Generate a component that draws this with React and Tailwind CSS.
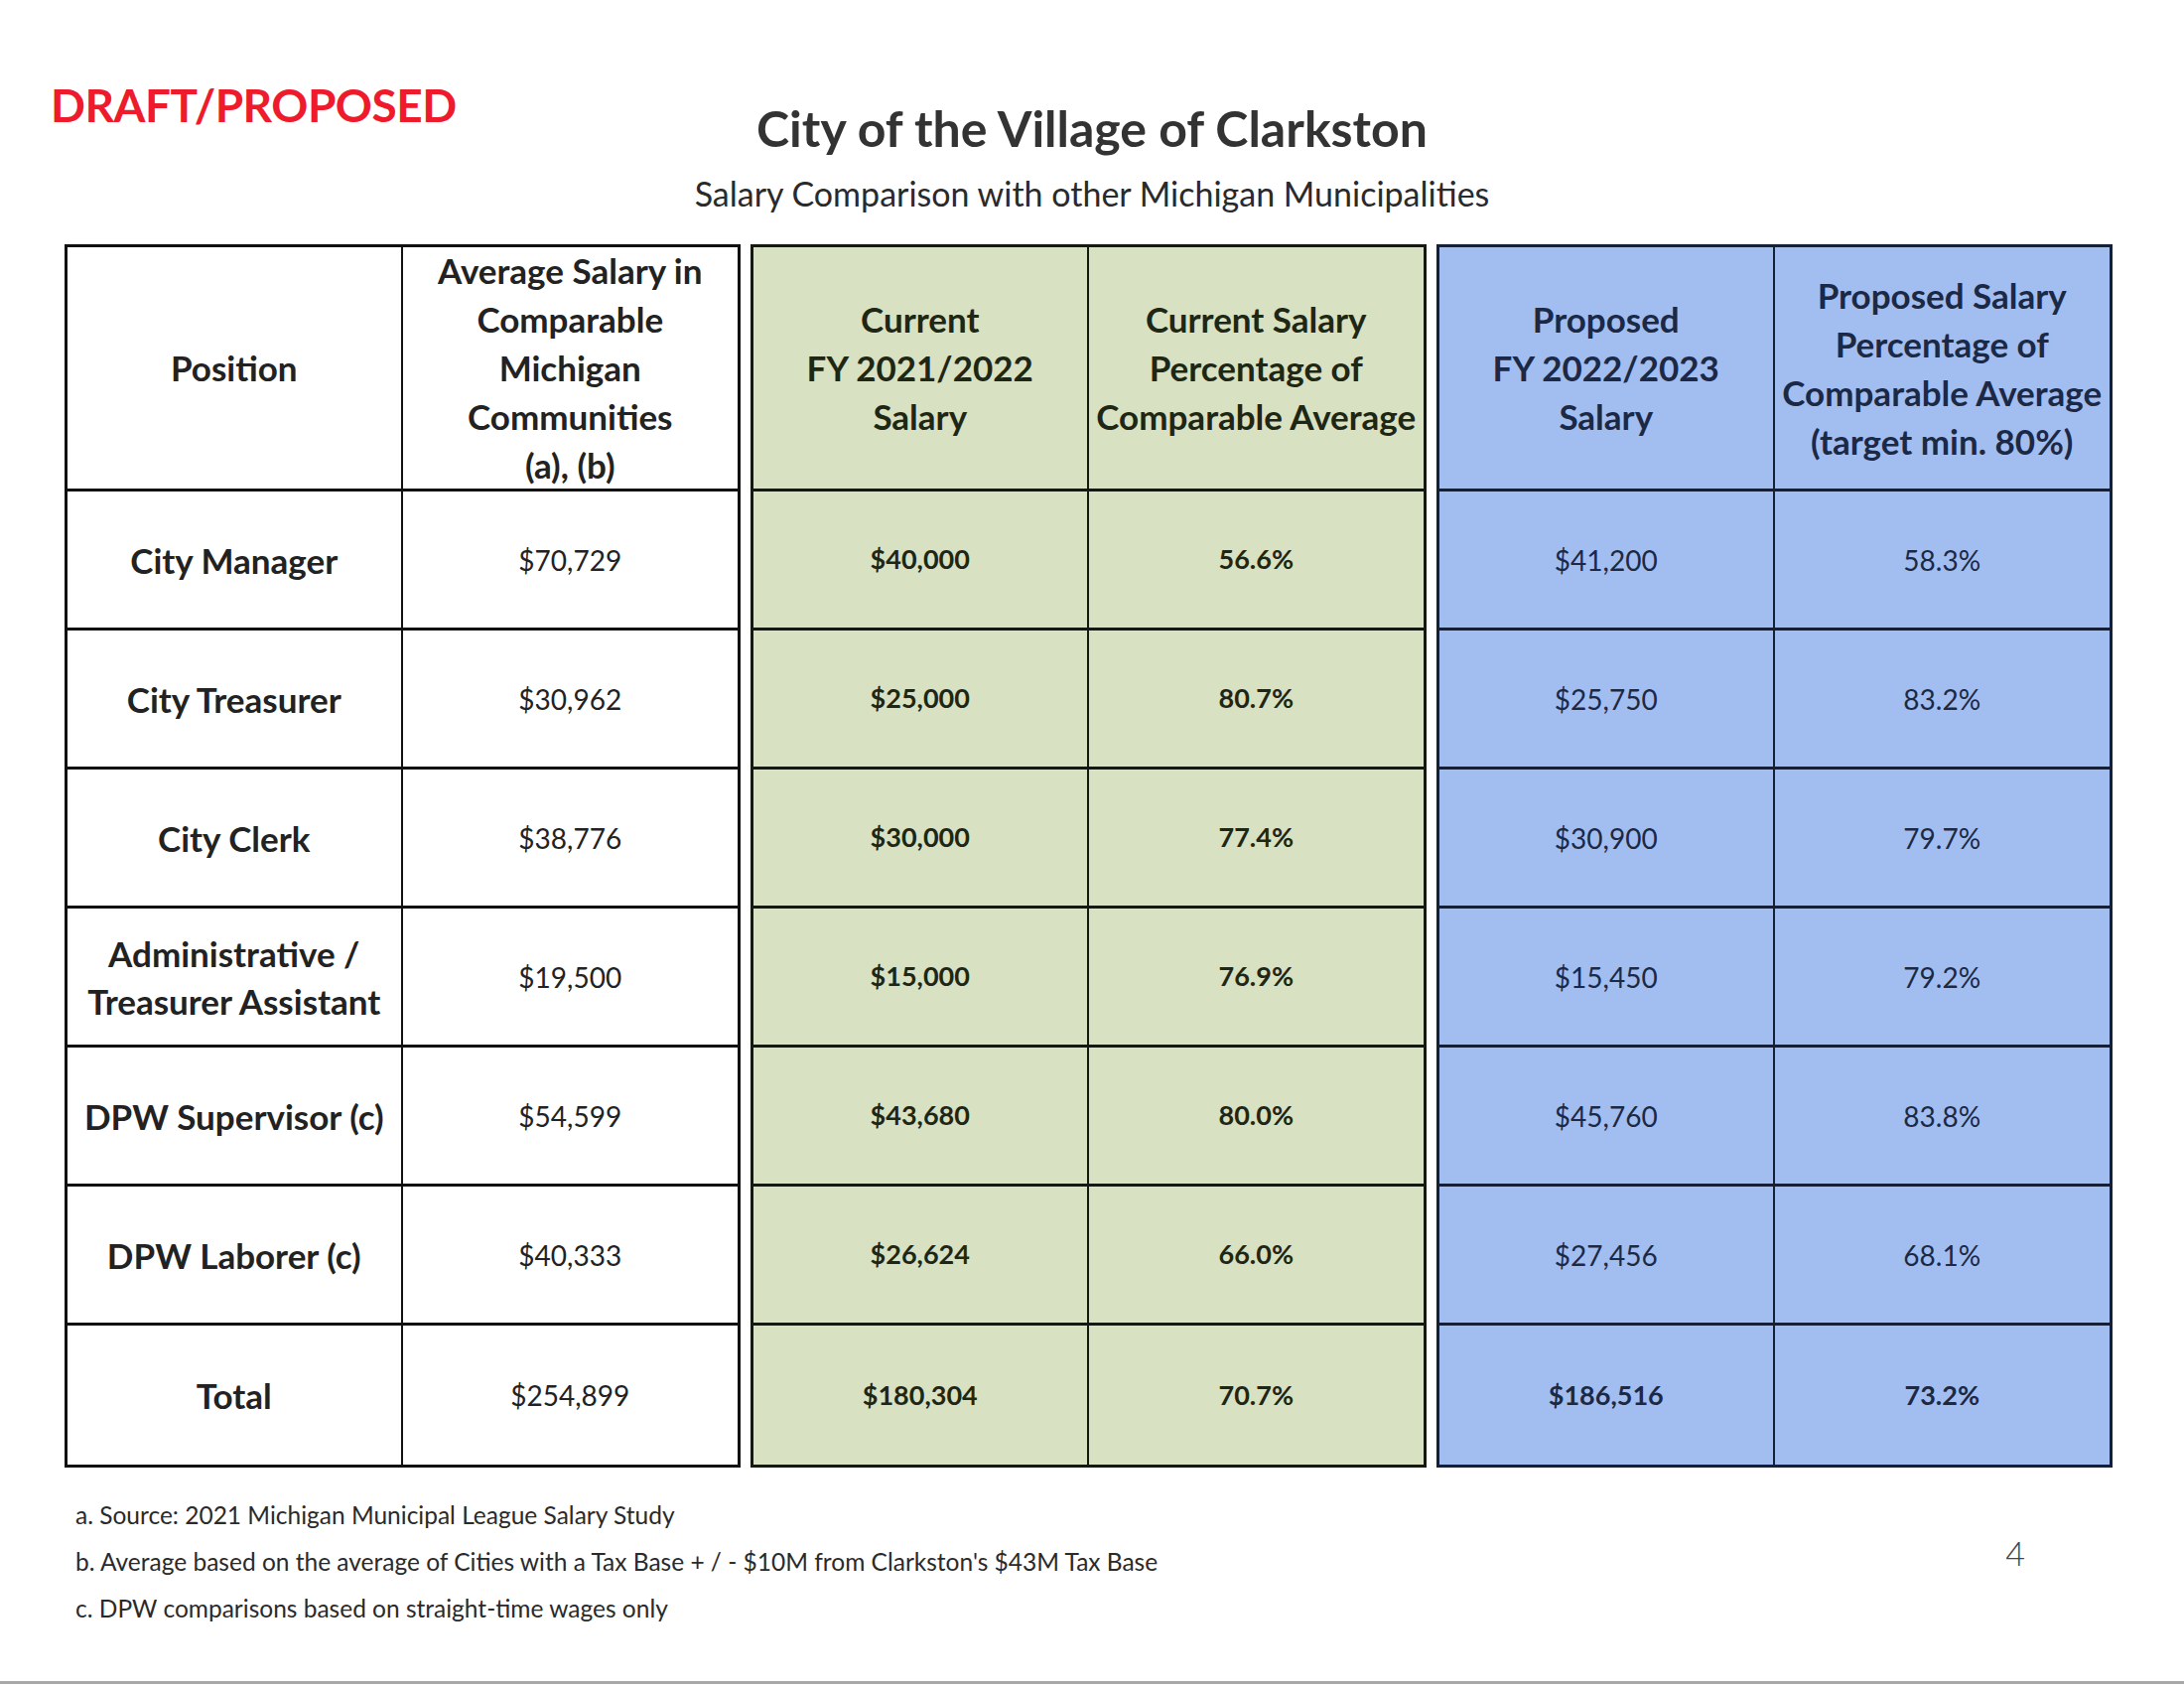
import React from "react";

const rows = [
  ["City Manager", "$70,729", "$40,000", "56.6%", "$41,200", "58.3%"],
  ["City Treasurer", "$30,962", "$25,000", "80.7%", "$25,750", "83.2%"],
  ["City Clerk", "$38,776", "$30,000", "77.4%", "$30,900", "79.7%"],
  ["Administrative /|Treasurer Assistant", "$19,500", "$15,000", "76.9%", "$15,450", "79.2%"],
  ["DPW Supervisor (c)", "$54,599", "$43,680", "80.0%", "$45,760", "83.8%"],
  ["DPW Laborer (c)", "$40,333", "$26,624", "66.0%", "$27,456", "68.1%"],
  ["Total", "$254,899", "$180,304", "70.7%", "$186,516", "73.2%"],
];

function Lines({ text }) {
  return text.split("|").map((t, i) => (
    <div key={i}>{t}</div>
  ));
}

function Block({ variant, headers, cells }) {
  const wrap =
    variant === "white"
      ? "bg-white border-[#111] text-[#222]"
      : variant === "green"
      ? "bg-[#d8e1c1] border-[#141a10] text-[#1e2614]"
      : "bg-[#a2bef0] border-[#142038] text-[#1b2946]";
  const cellBorder =
    variant === "white"
      ? "border-[#111]"
      : variant === "green"
      ? "border-[#141a10]"
      : "border-[#142038]";
  return (
    <div className={`w-[681px] border-[3px] ${wrap} grid grid-cols-2 grid-rows-[246px_repeat(7,140px)]`}>
      {headers.map((h, i) => (
        <div
          key={"h" + i}
          className={`flex flex-col items-center justify-center text-center font-bold text-[35px] leading-[49px] border-b-[3px] ${cellBorder} ${i === 0 ? "border-r-2" : ""}`}
        >
          <Lines text={h} />
        </div>
      ))}
      {cells.map((row, r) =>
        row.map((c, i) => {
          const isLast = r === cells.length - 1;
          let weight = "font-normal text-[28px]";
          if (variant === "white" && i === 0) weight = "font-bold text-[35px] leading-[48px]";
          if (variant === "green") weight = "font-bold text-[27px]";
          if (variant === "blue" && isLast) weight = "font-bold text-[27px]";
          return (
            <div
              key={r + "-" + i}
              className={`flex flex-col items-center justify-center text-center ${weight} ${cellBorder} ${i === 0 ? "border-r-2" : ""} ${isLast ? "" : "border-b-[3px]"}`}
            >
              <Lines text={c} />
            </div>
          );
        })
      )}
    </div>
  );
}

export default function App() {
  return (
    <div className="w-[2200px] h-[1700px] bg-white relative overflow-hidden font-['Lato','Liberation_Sans',sans-serif] flex flex-col">
      <div className="grid grid-cols-[1fr_auto_1fr] pt-[78px] h-[246px]">
        <div className="pl-[51px]">
          <div className="text-[#ee1b2c] font-bold text-[46px] leading-[56px] tracking-[-0.5px]">DRAFT/PROPOSED</div>
        </div>
        <div className="flex flex-col items-center text-[#333]">
          <div className="font-bold text-[50px] leading-[60px] mt-[21px]">City of the Village of Clarkston</div>
          <div className="text-[34px] leading-[40px] mt-[16px] text-[#2a2a2a]">Salary Comparison with other Michigan Municipalities</div>
        </div>
        <div />
      </div>

      <div className="flex gap-[10px] pl-[65px]">
        <Block
          variant="white"
          headers={["Position", "Average Salary in|Comparable|Michigan|Communities|(a), (b)"]}
          cells={rows.map((r) => [r[0], r[1]])}
        />
        <Block
          variant="green"
          headers={["Current|FY 2021/2022|Salary", "Current Salary|Percentage of|Comparable Average"]}
          cells={rows.map((r) => [r[2], r[3]])}
        />
        <Block
          variant="blue"
          headers={["Proposed|FY 2022/2023|Salary", "Proposed Salary|Percentage of|Comparable Average|(target min. 80%)"]}
          cells={rows.map((r) => [r[4], r[5]])}
        />
      </div>

      <div className="flex justify-between pl-[76px] pr-[160px] mt-[34px] text-[#2a2a2a]">
        <div className="flex flex-col gap-[19px] text-[24.5px] leading-[28px]">
          <div>a. Source: 2021 Michigan Municipal League Salary Study</div>
          <div>b. Average based on the average of Cities with a Tax Base + / - $10M from Clarkston's $43M Tax Base</div>
          <div>c. DPW comparisons based on straight-time wages only</div>
        </div>
        <div className="text-[34px] font-light text-[#444] mt-[26px]">4</div>
      </div>

      <div className="absolute left-0 right-0 bottom-[4px] h-[3px] bg-[#a8a8a8]" />
    </div>
  );
}
